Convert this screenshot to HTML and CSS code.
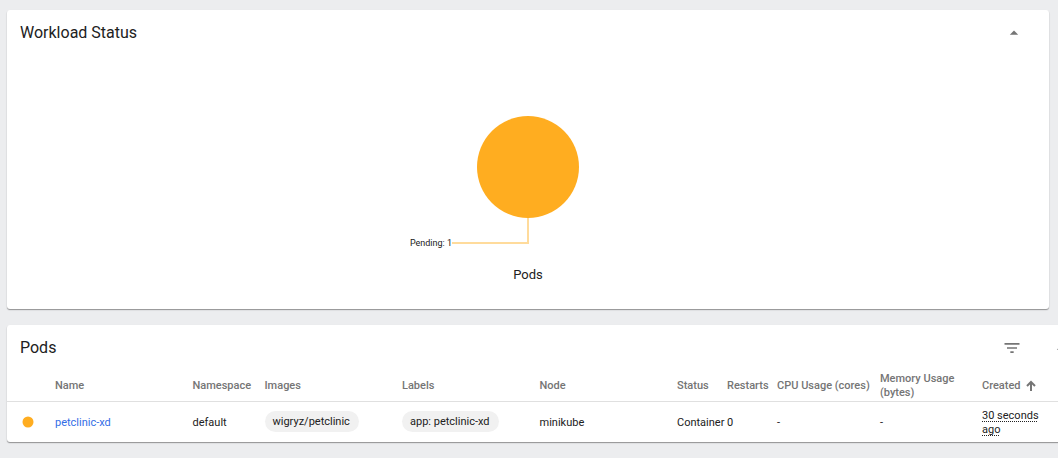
FILE: index.html
```
<!DOCTYPE html>
<html lang="en">
<head>
<meta charset="utf-8">
<title>Workloads</title>
<link rel="stylesheet" href="styles.css">
</head>
<body>
<main class="content">
  <section class="card">
    <header class="card-header">
      <h2 class="card-title">Workload Status</h2>
      <button class="icon-button" type="button" aria-label="Collapse workload status">
        <svg class="icon" viewBox="0 0 24 24"><path d="M7 14l5-5 5 5z"/></svg>
      </button>
    </header>
    <figure class="chart">
      <svg class="pie" viewBox="0 0 240 150" role="img" aria-label="Pods: 1 pending">
        <circle class="slice" cx="120" cy="61" r="51"/>
        <path class="leader" d="M120 112V137H44"/>
        <text class="slice-label" x="44" y="140" text-anchor="end">Pending: 1</text>
      </svg>
      <figcaption class="chart-title">Pods</figcaption>
    </figure>
  </section>

  <section class="card card-wide">
    <header class="card-header">
      <h2 class="card-title">Pods</h2>
      <div class="actions">
        <button class="icon-button" type="button" aria-label="Filter">
          <svg class="icon" viewBox="0 0 24 24"><path d="M10 18h4v-2h-4v2zM3 6v2h18V6H3zm3 7h12v-2H6v2z"/></svg>
        </button>
        <button class="icon-button" type="button" aria-label="Collapse pods">
          <svg class="icon" viewBox="0 0 24 24"><path d="M7 14l5-5 5 5z"/></svg>
        </button>
      </div>
    </header>
    <table class="pods">
      <colgroup>
        <col class="col-icon"><col><col class="col-medium"><col><col><col>
        <col class="col-small"><col class="col-small"><col class="col-cpu"><col class="col-memory">
        <col class="col-medium"><col class="col-menu">
      </colgroup>
      <thead>
        <tr>
          <th></th><th>Name</th><th>Namespace</th><th>Images</th><th>Labels</th><th>Node</th>
          <th>Status</th><th>Restarts</th><th>CPU Usage (cores)</th><th>Memory Usage (bytes)</th>
          <th><span class="sorted">Created
            <svg class="sort-icon" viewBox="0 0 12 12"><path d="M6 11V2M2 6l4-4 4 4"/></svg></span></th>
          <th></th>
        </tr>
      </thead>
      <tbody>
        <tr>
          <td class="status-cell"><svg class="status-icon" viewBox="0 0 12 12"><circle cx="6" cy="6" r="5.5"/></svg></td>
          <td><a class="link" href="#petclinic-xd">petclinic-xd</a></td>
          <td>default</td>
          <td class="chip-cell"><span class="chip">wigryz/petclinic</span></td>
          <td class="chip-cell"><span class="chip">app: petclinic-xd</span></td>
          <td>minikube</td>
          <td><div class="clipped">Container</div></td>
          <td>0</td>
          <td>-</td>
          <td>-</td>
          <td><span class="age">30 seconds ago</span></td>
          <td></td>
        </tr>
      </tbody>
    </table>
  </section>
</main>
</body>
</html>
```
FILE: styles.css
```
* { box-sizing: border-box; }

body {
  margin: 0;
  overflow: hidden;
  background: #ecedef;
  color: #212121;
  font-family: Roboto, "Liberation Sans", sans-serif;
  font-size: 11px;
  line-height: 14px;
}

.content {
  display: flex;
  flex-direction: column;
  gap: 16px;
  padding: 10px 9px 16px 7px;
}

.card {
  background: #fff;
  border-radius: 3px;
  box-shadow: 0 1px 1px rgba(0, 0, 0, .34), 0 1px 2px rgba(0, 0, 0, .08);
}

.card-wide { min-width: 1089px; }

.card-header {
  display: flex;
  align-items: center;
  justify-content: space-between;
  height: 45px;
  padding: 0 25px 0 13px;
}

.card-title {
  margin: 0;
  font-size: 16px;
  font-weight: 400;
  line-height: 24px;
}

.actions { display: flex; gap: 29px; }

.icon-button {
  display: flex;
  padding: 0;
  border: 0;
  background: none;
  color: #757575;
}

.icon {
  width: 20px;
  height: 20px;
  fill: currentColor;
}

.chart {
  display: flex;
  flex-direction: column;
  align-items: center;
  margin: 0;
  padding: 51px 0 25px;
}

.pie { width: 240px; height: 150px; }
.slice { fill: #ffad20; }
.leader { fill: none; stroke: #ffdb9b; stroke-width: 2; }
.slice-label { fill: #212121; font-size: 9px; }
.chart-title { padding-top: 10px; font-size: 13px; line-height: 18px; }

.pods {
  width: 100%;
  border-collapse: separate;
  border-spacing: 0;
  table-layout: fixed;
}

.col-icon { width: 48px; }
.col-medium { width: 72px; }
.col-small { width: 50px; }
.col-cpu { width: 103px; }
.col-memory { width: 102px; }
.col-menu { width: 42px; }

th, td {
  padding: 0;
  text-align: left;
  vertical-align: middle;
}

th {
  height: 32px;
  border-bottom: 1px solid #e0e0e0;
  color: #757575;
  font-weight: 500;
}

td {
  height: 40px;
  padding-top: 2px;
}

.sorted { display: flex; align-items: center; gap: 4px; }

.sort-icon {
  width: 12px;
  height: 12px;
  fill: none;
  stroke: currentColor;
  stroke-width: 2;
}

.status-cell { padding: 0 0 0 15px; }
.status-icon { display: block; width: 12px; height: 12px; fill: #ffad20; }
.link { color: #326de6; text-decoration: none; }

.chip-cell { padding: 0 0 2px; }

.chip {
  display: block;
  width: fit-content;
  padding: 4px 9px 3px 8px;
  border-radius: 11px;
  background: #f1f1f1;
}

.clipped { width: 48px; overflow: hidden; white-space: nowrap; }

.age {
  text-decoration: underline dotted 1px;
  text-decoration-skip-ink: none;
  text-underline-offset: 2px;
}
```
